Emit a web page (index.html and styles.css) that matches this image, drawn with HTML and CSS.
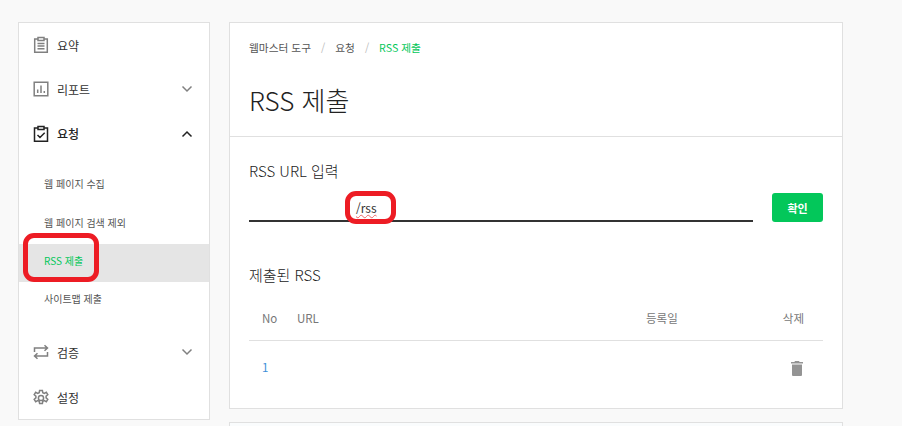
FILE: index.html
```html
<!DOCTYPE html>
<html lang="ko">
<head>
  <meta charset="UTF-8">
  <title>RSS 제출</title>
  <link rel="stylesheet" href="styles.css">
</head>
<body>
  <div class="layout">

    <!-- sidebar -->
    <nav class="side">
      <a class="side__item">
        <svg class="side__icon" viewBox="0 0 18 18"><path d="M6 3H2.700v13.300h12.600V3H12M6 1.600h6v3H6zM5.500 7.500h7M5.500 10h7M5.500 12.700h7" /></svg>
        <span>요약</span>
      </a>
      <a class="side__item">
        <svg class="side__icon" viewBox="0 0 18 18"><path d="M2.200 2.200h13.600v13.600H2.200zM5.700 13V9.500M9 13V5.500M12.300 13v-2" /></svg>
        <span>리포트</span>
        <svg class="side__arrow" viewBox="0 0 12 8"><path d="M1.500 1.500 6 6l4.500-4.500" /></svg>
      </a>
      <a class="side__item side__item--open">
        <svg class="side__icon" viewBox="0 0 18 18"><path d="M6 3H2.500v13.300h13V3H12M6 1.600h6v3H6zM5.500 10l2.500 2.500 4.700-4.700" /></svg>
        <span>요청</span>
        <svg class="side__arrow" viewBox="0 0 12 8"><path d="M1.500 6.500 6 2l4.500 4.500" /></svg>
      </a>
      <div class="side__sub">
        <a class="side__subitem">웹 페이지 수집</a>
        <a class="side__subitem">웹 페이지 검색 제외</a>
        <a class="side__subitem is-active">RSS 제출</a>
        <a class="side__subitem">사이트맵 제출</a>
      </div>
      <a class="side__item">
        <svg class="side__icon" viewBox="0 0 18 18"><path d="M2.500 9V5h12.500M12.500 2.200 15.500 5l-3 2.800M15.500 9v4H3M5.500 10.200 2.500 13l3 2.800" /></svg>
        <span>검증</span>
        <svg class="side__arrow" viewBox="0 0 12 8"><path d="M1.500 1.500 6 6l4.500-4.500" /></svg>
      </a>
      <a class="side__item">
        <svg class="side__icon" viewBox="0 0 18 18"><circle cx="9" cy="9" r="2.600" /><path d="M7.600 1.500h2.800l.4 2.200 1.500.7 2-1.100 1.500 2.400-1.700 1.500v1.600l1.700 1.500-1.500 2.400-2-1.100-1.500.7-.4 2.200H7.600l-.4-2.200-1.500-.7-2 1.100-1.500-2.400 1.700-1.500V7.200L2.200 5.700l1.500-2.400 2 1.100 1.500-.7z" /></svg>
        <span>설정</span>
      </a>
    </nav>

    <!-- content -->
    <div class="content">
      <main class="card">
        <header class="card__head">
          <div class="crumbs">
            <span>웹마스터 도구</span>
            <i>/</i>
            <span>요청</span>
            <i>/</i>
            <span class="crumbs__now">RSS 제출</span>
          </div>
          <h1>RSS 제출</h1>
        </header>

        <section class="card__body">
          <h2 class="label">RSS URL 입력</h2>
          <div class="form">
            <div class="field"><span class="field__text">/rss</span></div>
            <button class="btn">확인</button>
          </div>

          <h2 class="label label--list">제출된 RSS</h2>
          <div class="row row--head">
            <span class="col-no">No</span>
            <span class="col-url">URL</span>
            <span class="col-date">등록일</span>
            <span class="col-del">삭제</span>
          </div>
          <div class="row">
            <span class="col-no col-no--link">1</span>
            <span class="col-url"></span>
            <span class="col-date"></span>
            <span class="col-del">
              <svg class="trash" viewBox="0 0 12 15"><path d="M4 0h4l.6 1H12v1.500H0V1h3.400zM1 3.500h10V14a1 1 0 0 1-1 1H2a1 1 0 0 1-1-1z" /></svg>
            </span>
          </div>
        </section>
      </main>
      <div class="card card--next"></div>
    </div>
  </div>

  <!-- red marks drawn on top of the screenshot -->
  <div class="mark mark--side"></div>
  <div class="mark mark--field"></div>
</body>
</html>
```

FILE: styles.css
```css
* {
  box-sizing: border-box;
  margin: 0;
  padding: 0;
}
html, body {
  height: 426px;
  overflow: hidden;
}
body {
  background: #f9f9f9;
  color: #222;
  font-family: "Noto Sans CJK KR", "Noto Sans", sans-serif;
  position: relative;
}

.layout {
  display: flex;
  align-items: flex-start;
  gap: 19px;
  height: 426px;
  overflow: hidden;
  padding: 22px 0 0 18px;
}

/* ---------- sidebar ---------- */
.side {
  width: 192px;
  height: 398px;
  background: #fff;
  border: 1px solid #e0e0e0;
  flex: none;
}
.side__item {
  display: flex;
  align-items: center;
  height: 44.5px;
  padding: 0 16px 0 13px;
  font-size: 12px;
  color: #333;
}
.side__item:first-child {
  height: 44px;
}
.side__item:last-child {
  height: 46px;
}
.side__item span {
  flex: 1;
  margin-left: 7px;
}
.side__icon {
  width: 18px;
  height: 18px;
  fill: none;
  stroke: #808080;
  stroke-width: 1.5;
}
.side__arrow {
  width: 12px;
  height: 8px;
  fill: none;
  stroke: #808080;
  stroke-width: 1.5;
}
.side__item--open {
  font-weight: 500;
  color: #222;
}
.side__item--open .side__icon,
.side__item--open .side__arrow {
  stroke: #222;
}
.side__sub {
  padding: 11px 0 9.5px;
}
.side__subitem {
  display: block;
  height: 38.5px;
  padding: 9px 0 0 25px;
  font-size: 10px;
  line-height: 16px;
  color: #555;
}
.side__subitem.is-active {
  height: 38px;
  background: #e5e5e5;
  color: #03c75a;
}

/* ---------- content ---------- */
.content {
  width: 614px;
  flex: none;
}
.card {
  background: #fff;
  border: 1px solid #e0e0e0;
  display: block;
  height: 387px;
}
.card--next {
  height: 60px;
  margin-top: 13px;
  background: #fafcfd;
}
.card__head {
  height: 114px;
  padding: 17px 19px 0;
  border-bottom: 1px solid #e0e0e0;
}
.crumbs {
  display: flex;
  gap: 10px;
  font-size: 10.7px;
  line-height: 16px;
  color: #555;
}
.crumbs i {
  font-style: normal;
  color: #bbb;
}
.crumbs__now {
  color: #03c75a;
}
.card__head h1 {
  margin-top: 27px;
  font-size: 26px;
  line-height: 34px;
  font-weight: 300;
  color: #222;
}
.card__body {
  padding: 24px 19px 0;
}
.label {
  font-size: 15px;
  line-height: 20px;
  font-weight: 300;
  color: #222;
}
.label--list {
  margin-top: 43px;
  margin-bottom: 10px;
}
.form {
  display: flex;
  align-items: flex-end;
  gap: 19px;
  height: 30px;
  margin-top: 11px;
}
.field {
  flex: 1;
  height: 28px;
  border-bottom: 2px solid #333;
  padding-left: 107px;
}
.field__text {
  font-size: 12px;
  line-height: 24px;
  color: #333;
  text-decoration: underline wavy #e66;
  text-decoration-thickness: 1px;
  text-underline-offset: 1px;
}
.btn {
  width: 51px;
  height: 29px;
  background: #03c75a;
  border: 0;
  border-radius: 3px;
  color: #fff;
  font-family: inherit;
  font-size: 11px;
  font-weight: 700;
}

/* ---------- table ---------- */
.row {
  display: flex;
  align-items: center;
  height: 52px;
  font-size: 11.5px;
  color: #777;
}
.row--head {
  height: 46px;
  border-bottom: 1px solid #e0e0e0;
}
.col-no {
  width: 48px;
  padding-left: 13px;
}
.col-no--link {
  color: #3d8fd8;
}
.col-url {
  width: 338px;
}
.col-date {
  width: 116px;
  padding-left: 11px;
}
.col-del {
  flex: 1;
  display: flex;
  justify-content: flex-end;
  padding-right: 19px;
}
.trash {
  width: 12px;
  height: 15px;
  fill: #949494;
  margin: 2px 1px 0 0;
}

/* ---------- red marks ---------- */
.mark {
  position: absolute;
  border: 5px solid #ed1c24;
  border-radius: 11px;
}
.mark--side {
  left: 23px;
  top: 233px;
  width: 76px;
  height: 49px;
}
.mark--field {
  left: 345px;
  top: 191px;
  width: 51px;
  height: 33px;
}
```
